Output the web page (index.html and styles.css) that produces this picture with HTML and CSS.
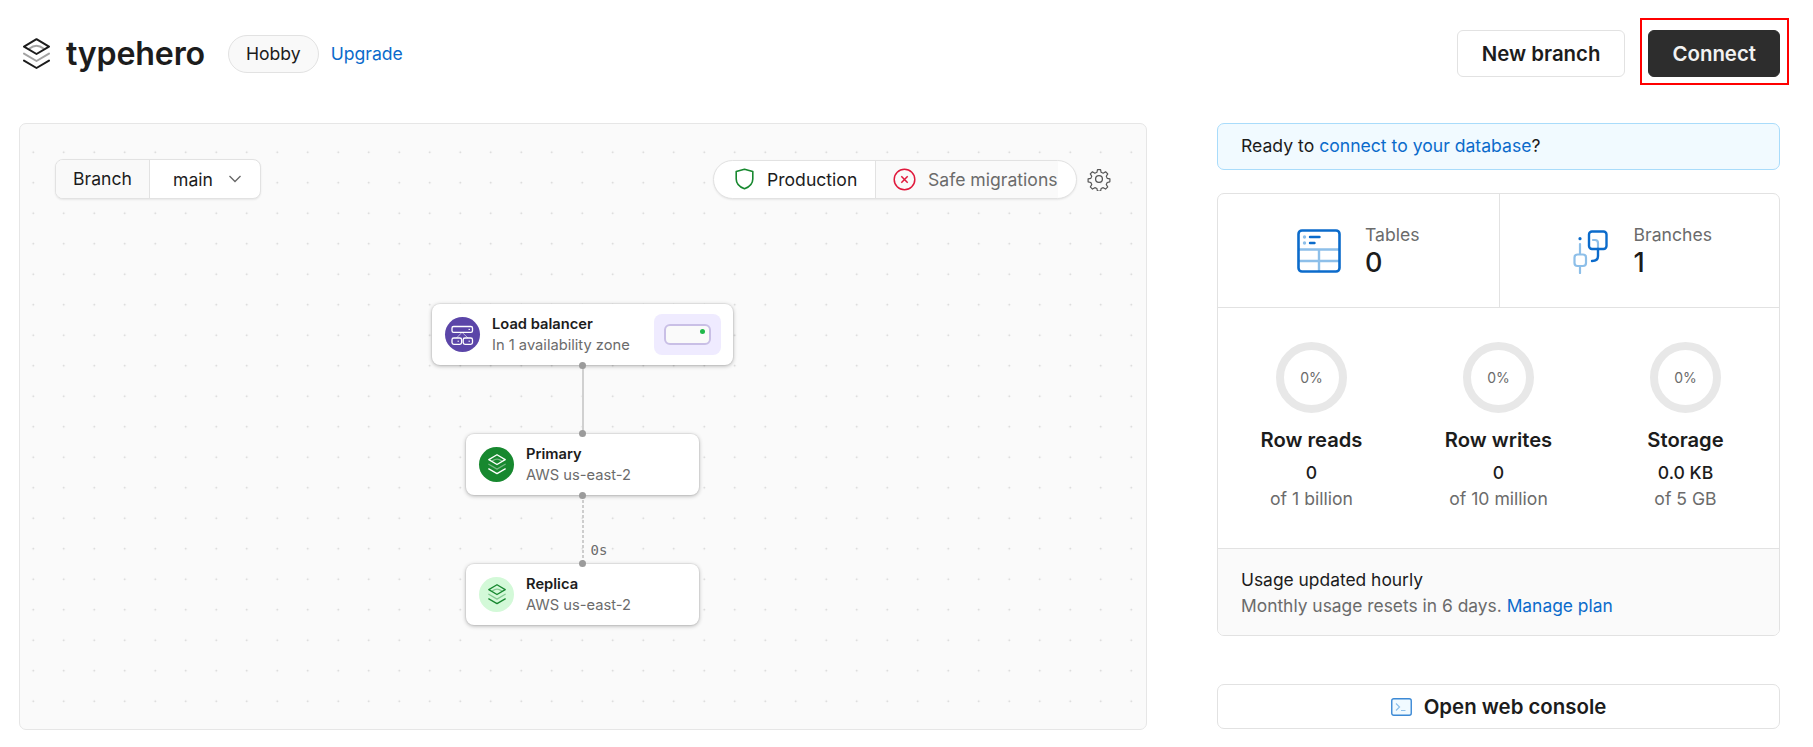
FILE: index.html
```html
<!DOCTYPE html>
<html lang="en">
<head>
    <meta charset="UTF-8">
    <title>typehero</title>
    <link rel="stylesheet" href="styles.css">
</head>

<body>
    <svg class="defs" width="0" height="0">
        <symbol id="stack" viewBox="0 0 27 32">
            <g fill="none" stroke="currentColor" stroke-width="2" stroke-linecap="round" stroke-linejoin="round">
                <path d="M13.5 1.2 26 8.6 13.5 16 1 8.6Z"/>
                <path d="M1 22.6 13.5 30 26 22.6"/>
                <g opacity="0.4">
                    <path d="M6.5 10.5Q13.5 5 20.5 10.5"/>
                    <path d="M1 15.6 13.5 23 26 15.6"/>
                </g>
            </g>
        </symbol>
    </svg>

    <header class="topbar">
        <div class="brand">
            <svg class="brand-icon"><use href="#stack"/></svg>
            <span class="brand-name">typehero</span>
            <span class="plan">Hobby</span>
            <a class="link upgrade" href="#">Upgrade</a>
        </div>
        <div class="actions">
            <button class="btn">New branch</button>
            <div class="connect-wrap">
                <button class="btn btn-dark">Connect</button>
                <div class="highlight"></div>
            </div>
        </div>
    </header>

    <main class="layout">
        <section class="canvas">
            <div class="canvas-top">
                <div class="branch-select">
                    <span class="branch-label">Branch</span>
                    <span class="branch-value">main
                        <svg width="14" height="8" viewBox="0 0 14 8"><path d="M1.5 1 7 6.5 12.5 1" fill="none" stroke="#666" stroke-width="1.3"/></svg>
                    </span>
                </div>
                <div class="env">
                    <div class="env-pill">
                        <span class="env-item env-prod">
                            <svg width="19" height="22" viewBox="0 0 19 22"><path d="M9.5 1.2 17.8 3.6V11C17.8 15.8 14.4 19 9.5 20.8 4.6 19 1.2 15.8 1.2 11V3.6Z" fill="none" stroke="#17882f" stroke-width="1.6" stroke-linejoin="round"/></svg>
                            Production
                        </span>
                        <span class="env-item env-safe">
                            <svg width="23" height="23" viewBox="0 0 23 23"><circle cx="11.5" cy="11.5" r="10.3" fill="none" stroke="#e0193c" stroke-width="1.5"/><path d="M8.3 8.3 14.7 14.7M14.7 8.3 8.3 14.7" stroke="#e0193c" stroke-width="1.5"/></svg>
                            Safe migrations
                        </span>
                    </div>
                    <svg width="24" height="24" viewBox="0 0 24 24" fill="none" stroke="#555" stroke-width="1.3" stroke-linejoin="round"><circle cx="12" cy="12" r="3.4"/><path d="M10.3 1.6h3.4l.6 3 2.3 1 2.6-1.6 2.4 2.4-1.6 2.6 1 2.3 3 .6v0l-.1 3.2-2.9.7-1 2.3 1.6 2.6-2.4 2.4-2.6-1.6-2.3 1-.6 2.9h-3.4l-.6-2.9-2.3-1-2.6 1.6-2.4-2.4 1.6-2.6-1-2.3-3-.7v-3.2l3-.6 1-2.3-1.6-2.6 2.4-2.4 2.6 1.6 2.3-1z" transform="translate(1.1 1.1) scale(.91)"/></svg>
                </div>
            </div>

            <div class="diagram">
                <div class="node node-lb">
                    <span class="node-icon icon-lb">
                        <svg width="35" height="35" viewBox="0 0 35 35" fill="none" stroke="#fff" stroke-width="1.3" stroke-linejoin="round">
                            <path d="M17 15.3 11.5 21M17 15.3 23 21" stroke-opacity=".6" stroke-width="1"/>
                            <rect x="7" y="9.5" width="20.5" height="5.8" rx="1.6"/>
                            <rect x="7" y="21" width="9.6" height="6.4" rx="1.8"/>
                            <rect x="18.2" y="21" width="9.3" height="6.4" rx="1.8"/>
                            <path d="M23.5 12.4H25M12.5 24.2H14M23.5 24.2H25" stroke-width="1"/>
                        </svg>
                    </span>
                    <div class="node-text">
                        <div class="node-title">Load balancer</div>
                        <div class="node-sub">In 1 availability zone</div>
                    </div>
                    <div class="lb-chart">
                        <div class="lb-bar"><i class="lb-dot"></i></div>
                    </div>
                </div>
                <div class="link-line"></div>
                <div class="node">
                    <span class="node-icon icon-primary"><svg class="stack-small"><use href="#stack"/></svg></span>
                    <div class="node-text">
                        <div class="node-title">Primary</div>
                        <div class="node-sub">AWS us-east-2</div>
                    </div>
                </div>
                <div class="link-line link-dotted"><span class="lag">0s</span></div>
                <div class="node">
                    <span class="node-icon icon-replica"><svg class="stack-small"><use href="#stack"/></svg></span>
                    <div class="node-text">
                        <div class="node-title">Replica</div>
                        <div class="node-sub">AWS us-east-2</div>
                    </div>
                </div>
            </div>
        </section>

        <aside class="side">
            <div class="banner">Ready to <a class="link" href="#">connect to your database</a>?</div>

            <div class="card">
                <div class="stats">
                    <div class="stat">
                        <svg width="44" height="44" viewBox="0 0 44 44" fill="none">
                            <path d="M2 20.5H42M2 32H42M22 20.5V42" stroke="#8dbfe9" stroke-width="2.4"/>
                            <rect x="1.5" y="1.5" width="41" height="41" rx="3.5" stroke="#0b6bcb" stroke-width="2.6"/>
                            <circle cx="7.5" cy="8" r="1.7" fill="#8dbfe9"/>
                            <circle cx="7.5" cy="14" r="1.7" fill="#8dbfe9"/>
                            <path d="M13 8H22.5M13 14H17.5" stroke="#0b6bcb" stroke-width="2.4" stroke-linecap="round"/>
                        </svg>
                        <div>
                            <div class="stat-label">Tables</div>
                            <div class="stat-value">0</div>
                        </div>
                    </div>
                    <div class="stat stat-branches">
                        <svg width="36" height="46" viewBox="28 12 36 46" fill="none" stroke-width="2.2" stroke-linecap="round">
                            <path d="M35 28V38M35 50V57" stroke="#8dbfe9"/>
                            <rect x="29.5" y="38.5" width="11.5" height="11.5" rx="3" stroke="#8dbfe9"/>
                            <path d="M48 24H50Q53 24 53 27V33" stroke="#8dbfe9"/>
                            <rect x="44" y="15.5" width="17.5" height="17.5" rx="3" stroke="#0b6bcb" stroke-width="2.4"/>
                            <path d="M53 33V40Q53 45 47 45" stroke="#0b6bcb" stroke-width="2.4"/>
                            <circle cx="35" cy="22.7" r="1.6" fill="#0b6bcb" stroke="none"/>
                        </svg>
                        <div>
                            <div class="stat-label">Branches</div>
                            <div class="stat-value">1</div>
                        </div>
                    </div>
                </div>

                <div class="usage">
                    <div class="meter">
                        <div class="ring">0%</div>
                        <div class="meter-title">Row reads</div>
                        <div class="meter-value">0</div>
                        <div class="meter-limit">of 1 billion</div>
                    </div>
                    <div class="meter">
                        <div class="ring">0%</div>
                        <div class="meter-title">Row writes</div>
                        <div class="meter-value">0</div>
                        <div class="meter-limit">of 10 million</div>
                    </div>
                    <div class="meter">
                        <div class="ring">0%</div>
                        <div class="meter-title">Storage</div>
                        <div class="meter-value">0.0 KB</div>
                        <div class="meter-limit">of 5 GB</div>
                    </div>
                </div>

                <div class="card-foot">
                    <div>Usage updated hourly</div>
                    <div class="foot-sub">Monthly usage resets in 6 days. <a class="link" href="#">Manage plan</a></div>
                </div>
            </div>

            <button class="console">
                <svg width="21" height="18" viewBox="0 0 21 18" fill="none">
                    <rect x=".75" y=".75" width="19.5" height="16.5" rx="2" fill="#f1faff" stroke="#0b6bcb" stroke-opacity=".8" stroke-width="1.4"/>
                    <path d="M5 5.5 8.5 9 5 12.5M10 12.5H14.5" stroke="#8dbfe9" stroke-width="1.2"/>
                </svg>
                Open web console
            </button>
        </aside>
    </main>
</body>
</html>
```

FILE: styles.css
```css
* {
    box-sizing: border-box;
}

body {
    margin: 0;
    font-family: 'Inter', sans-serif;
    font-size: 17.6px;
    color: #1c1c1c;
    background-color: #fff;
}

.defs {
    display: block;
}

.link {
    color: #0b6bcb;
    text-decoration: none;
}

.topbar {
    display: flex;
    justify-content: space-between;
    align-items: center;
    padding: 30px 33px 46px 23px;
}

.brand {
    display: flex;
    align-items: center;
}

.brand-icon {
    width: 27px;
    height: 32px;
    color: #1c1c1c;
}

.brand-name {
    margin-left: 16px;
    font-size: 32.2px;
    font-weight: 600;
    letter-spacing: -0.2px;
}

.plan {
    margin-left: 23px;
    padding: 0 17px;
    height: 38px;
    line-height: 36px;
    background-color: #f9f9f9;
    border: 1px solid #e2e2e2;
    border-radius: 19px;
}

.upgrade {
    margin-left: 12px;
}

.actions {
    display: flex;
    gap: 23px;
}

.btn {
    height: 47px;
    padding: 0 24px;
    font: 600 20.4px 'Inter', sans-serif;
    color: #1c1c1c;
    background-color: #fff;
    border: 1px solid #e2e2e2;
    border-radius: 6px;
}

.btn-dark {
    display: block;
    padding: 0 23px;
    color: #f2f2f2;
    background-color: #2d2d2d;
    border-color: #2d2d2d;
}

.connect-wrap {
    position: relative;
}

.highlight {
    position: absolute;
    inset: -12px -9px -8px -8px;
    border: 2px solid #f00;
}

.layout {
    display: grid;
    grid-template-columns: 1128px 563px;
    gap: 70px;
    padding-left: 19px;
}

/* left panel */
.canvas {
    height: 607px;
    padding: 35px 35px 0 35px;
    background-color: #fafafa;
    background-image: radial-gradient(circle, #cfcfcf 0.7px, transparent 1.1px);
    background-size: 30.5px 30.5px;
    background-position: -2px 13px;
    border: 1px solid #e6e6e6;
    border-radius: 7px;
}

.canvas-top {
    display: flex;
    justify-content: space-between;
    align-items: center;
}

.branch-select {
    display: flex;
    width: 206px;
    height: 40px;
    background-color: #fff;
    border: 1px solid #e2e2e2;
    border-radius: 8px;
    box-shadow: 0 1px 2px rgba(0, 0, 0, 0.08);
    overflow: hidden;
}

.branch-label {
    width: 94px;
    padding-left: 17px;
    line-height: 38px;
    background-color: #f9f9f9;
    border-right: 1px solid #e2e2e2;
}

.branch-value {
    display: flex;
    align-items: center;
    gap: 15px;
    padding-left: 23px;
}

.env {
    display: flex;
    align-items: center;
    gap: 10px;
}

.env-pill {
    display: flex;
    width: 364px;
    height: 39px;
    background-color: #fff;
    border: 1px solid #e2e2e2;
    border-radius: 20px;
    box-shadow: 0 1px 2px rgba(0, 0, 0, 0.08);
    overflow: hidden;
}

.env-item {
    display: flex;
    align-items: center;
}

.env-prod {
    width: 162px;
    gap: 13px;
    padding-left: 21px;
    border-right: 1px solid #e2e2e2;
}

.env-safe {
    gap: 12px;
    padding-left: 17px;
    color: #6b6b6b;
    background-color: #fafafa;
}

.diagram {
    display: flex;
    flex-direction: column;
    align-items: center;
    margin-top: 105px;
    margin-right: 1px;
}

.node {
    display: flex;
    align-items: center;
    width: 233px;
    height: 61px;
    padding-left: 13px;
    background-color: #fff;
    border-radius: 8px;
    box-shadow: 0 0 0 1px rgba(0, 0, 0, 0.04), 0 1px 4px rgba(0, 0, 0, 0.3);
}

.node-lb {
    width: 301px;
}

.node-icon {
    flex: none;
    display: flex;
    align-items: center;
    justify-content: center;
    width: 35px;
    height: 35px;
    border-radius: 50%;
}

.icon-lb {
    background-color: #5b45a8;
}

.icon-primary {
    color: #fff;
    background-color: #17882f;
}

.icon-replica {
    color: #17882f;
    background-color: #d3f9d8;
}

.stack-small {
    width: 18px;
    height: 21px;
}

.node-text {
    margin-left: 12px;
}

.node-title {
    font-size: 14.7px;
    font-weight: 600;
    line-height: 20px;
}

.node-sub {
    margin-top: 1px;
    font-size: 14.7px;
    line-height: 20px;
    color: #6b6b6b;
}

.lb-chart {
    margin-left: auto;
    margin-right: 12px;
    width: 67px;
    height: 41px;
    padding: 10px;
    background-color: #efebff;
    border-radius: 8px;
}

.lb-bar {
    position: relative;
    height: 21px;
    background-color: #fafafa;
    border: 2px solid #c9bfe6;
    border-radius: 6px;
}

.lb-dot {
    position: absolute;
    top: 3px;
    right: 4px;
    width: 5px;
    height: 5px;
    background-color: #1fb84a;
    border-radius: 50%;
}

.link-line {
    position: relative;
    width: 2px;
    height: 69px;
    background-color: #d0d0d0;
}

.link-line::before,
.link-line::after {
    content: "";
    position: absolute;
    left: -2.5px;
    width: 7px;
    height: 7px;
    background-color: #9b9b9b;
    border-radius: 50%;
}

.link-line::before {
    top: -3px;
}

.link-line::after {
    bottom: -3px;
}

.link-dotted {
    background: repeating-linear-gradient(to bottom, #cdcdcd 0, #cdcdcd 3px, transparent 3px, transparent 5px);
}

.lag {
    position: absolute;
    left: 9px;
    bottom: 6px;
    font: 14px 'DejaVu Sans Mono', monospace;
    color: #6b6b6b;
}

/* right column */
.side {
    display: flex;
    flex-direction: column;
}

.banner {
    height: 47px;
    padding-left: 23px;
    line-height: 44px;
    background-color: #f1faff;
    border: 1px solid #a9dcfb;
    border-radius: 7px;
}

.card {
    margin-top: 23px;
    height: 443px;
    border: 1px solid #e2e2e2;
    border-radius: 7px;
    overflow: hidden;
}

.stats {
    display: grid;
    grid-template-columns: 1fr 1fr;
    height: 114px;
    border-bottom: 1px solid #e2e2e2;
}

.stat {
    display: flex;
    align-items: center;
    justify-content: center;
    gap: 24px;
}

.stat + .stat {
    border-left: 1px solid #e2e2e2;
}

.stat-branches {
    padding-left: 6px;
    gap: 25px;
}

.stat-label {
    margin-top: -1px;
    line-height: 24px;
    color: #6b6b6b;
}

.stat-value {
    margin-top: 1px;
    font-size: 27px;
    font-weight: 500;
    line-height: 30px;
}

.usage {
    display: grid;
    grid-template-columns: repeat(3, 1fr);
    height: 241px;
    padding-top: 34px;
    text-align: center;
    border-bottom: 1px solid #e2e2e2;
}

.ring {
    width: 71px;
    height: 71px;
    margin: 0 auto;
    font-size: 14px;
    line-height: 55px;
    color: #6b6b6b;
    border: 8px solid #e8e8e8;
    border-radius: 50%;
}

.meter-title {
    margin-top: 14px;
    font-size: 20.2px;
    font-weight: 600;
    line-height: 26px;
}

.meter-value {
    margin-top: 7px;
    font-weight: 500;
    line-height: 26px;
}

.meter-limit {
    line-height: 26px;
    color: #6b6b6b;
}

.card-foot {
    height: 87px;
    padding: 18px 23px 0;
    font-size: 17.4px;
    line-height: 26px;
    background-color: #fafafa;
}

.foot-sub {
    color: #6b6b6b;
}

.console {
    display: flex;
    align-items: center;
    justify-content: center;
    gap: 12px;
    margin-top: 48px;
    height: 45px;
    font: 600 20.4px 'Inter', sans-serif;
    color: #1c1c1c;
    background-color: #fff;
    border: 1px solid #e2e2e2;
    border-radius: 7px;
}
```
